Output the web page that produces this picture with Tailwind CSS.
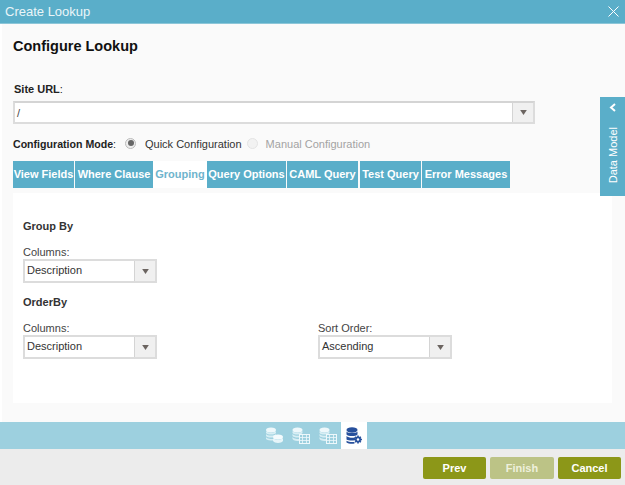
<!DOCTYPE html>
<html><head><meta charset="utf-8"><title>Create Lookup</title>
<script src="https://cdn.jsdelivr.net/npm/@tailwindcss/browser@4"></script></head>
<body class="m-0 overflow-hidden bg-white">
<div class="relative flex flex-col w-[625px] h-[485px] overflow-hidden font-['Liberation_Sans',Arial,sans-serif] text-[#333]">
  <header class="flex items-center justify-between h-[24px] shrink-0 bg-[#5aaec9] border-b border-[#8cc6d8] pl-[5px] pr-[6px] text-white text-[13px]">
    <span class="text-[#eaf5f8]">Create Lookup</span>
    <svg width="11" height="11" viewBox="0 0 11 11" fill="none" stroke="#fff" stroke-width="1"><path d="M0.5 0.5 10.5 10.5M10.5 0.5 0.5 10.5"/></svg>
  </header>
  <main class="flex-1 bg-[#fafafa] ml-[2px] pl-[11px] pr-[13px] flex flex-col min-h-0">
    <h1 class="mt-[13px] h-[19px] leading-[19px] text-[14.5px] font-bold text-[#111]">Configure Lookup</h1>
    <div class="mt-[26px] h-[14px] leading-[14px] text-[11px] font-bold text-[#222] pl-[1px]">Site URL<span class="font-normal">:</span></div>
    <div class="mt-[5px] flex h-[23px] w-[522px] border-2 border-[#dcdcdc] bg-white border-t-[#d4d4d4]">
      <div class="flex-1 pl-[2px] text-[11px] leading-[20px] text-[#444]">/</div>
      <div class="w-[21px] border-l border-[#d4d4d4] bg-[#f0f0f0] flex items-center justify-center"><svg width="7" height="5" viewBox="0 0 8 6"><path d="M0 0H8L4 6Z" fill="#6b6460"/></svg></div>
    </div>
    <div class="mt-[12px] h-[17px] flex items-center text-[11px]">
      <span class="font-bold text-[#222] text-[10.6px]">Configuration Mode<span class="font-normal">:</span></span>
      <span class="ml-[9px] mb-[3px] w-[11px] h-[11px] rounded-full border border-[#bbb] bg-[#eee] flex items-center justify-center"><span class="w-[6px] h-[6px] rounded-full bg-[#666]"></span></span>
      <span class="ml-[9px] text-[#333]">Quick Configuration</span>
      <span class="ml-[5px] mb-[3px] w-[11px] h-[11px] rounded-full border border-[#e4e4e4] bg-[#f2f2f2]"></span>
      <span class="ml-[8px] text-[#a3a3a3]">Manual Configuration</span>
    </div>
    <nav class="mt-[8px] flex h-[27px] text-[11px] font-bold text-white leading-[27px] text-center whitespace-nowrap">
      <div class="w-[61px] bg-[#5aaec9]">View Fields</div>
      <div class="w-[78px] ml-[1px] bg-[#5aaec9]">Where Clause</div>
      <div class="w-[54px] bg-white text-[#6fb4cd]">Grouping</div>
      <div class="w-[79px] bg-[#5aaec9]">Query Options</div>
      <div class="w-[71px] bg-[#5aaec9] ml-[1px]">CAML Query</div>
      <div class="w-[61px] bg-[#5aaec9] ml-[2px]">Test Query</div>
      <div class="w-[88px] bg-[#5aaec9] ml-[1px]">Error Messages</div>
    </nav>
    <section class="mt-[5px] h-[210px] bg-white pl-[10px] text-[11px]">
      <h2 class="pt-[26px] h-[40px] leading-[14px] font-bold text-[11px] text-[#333]">Group By</h2>
      <div class="mt-[12px] h-[14px] leading-[14px] text-[#444]">Columns:</div>
      <div class="flex h-[24px] w-[134px] border-2 border-[#dcdcdc] bg-white">
        <div class="flex-1 pl-[2px] leading-[19px] text-[#333]">Description</div>
        <div class="w-[21px] border-l border-[#d4d4d4] bg-[#f0f0f0] flex items-center justify-center"><svg width="7" height="5" viewBox="0 0 8 6"><path d="M0 0H8L4 6Z" fill="#6b6460"/></svg></div>
      </div>
      <h2 class="mt-[12px] h-[14px] leading-[14px] font-bold text-[11px] text-[#333]">OrderBy</h2>
      <div class="mt-[12px] flex">
        <div class="w-[295px]">
          <div class="h-[14px] leading-[14px] text-[#444]">Columns:</div>
          <div class="flex h-[24px] w-[134px] border-2 border-[#dcdcdc] bg-white">
            <div class="flex-1 pl-[2px] leading-[19px] text-[#333]">Description</div>
            <div class="w-[21px] border-l border-[#d4d4d4] bg-[#f0f0f0] flex items-center justify-center"><svg width="7" height="5" viewBox="0 0 8 6"><path d="M0 0H8L4 6Z" fill="#6b6460"/></svg></div>
          </div>
        </div>
        <div>
          <div class="h-[14px] leading-[14px] text-[#444]">Sort Order:</div>
          <div class="flex h-[24px] w-[134px] border-2 border-[#dcdcdc] bg-white">
            <div class="flex-1 pl-[2px] leading-[19px] text-[#333]">Ascending</div>
            <div class="w-[21px] border-l border-[#d4d4d4] bg-[#f0f0f0] flex items-center justify-center"><svg width="7" height="5" viewBox="0 0 8 6"><path d="M0 0H8L4 6Z" fill="#6b6460"/></svg></div>
          </div>
        </div>
      </div>
    </section>
    <div class="h-[19px]"></div>
  </main>
  <div class="h-[27px] shrink-0 bg-[#9dd0df] flex justify-center pl-[5px]">
    <div class="w-[22px] flex items-center justify-center"><svg width="19" height="17" viewBox="0 0 19 17"><ellipse cx="6" cy="3" rx="5" ry="2.500" fill="#eef8fb"/><path d="M1 4C2.500 6 9.500 6 11 4V6C9.500 8 2.500 8 1 6ZM1 7C2.500 9 9.500 9 11 7V9C9.500 11 2.500 11 1 9ZM1 10C2 12 7 12 8 12V13.500C5 13.500 2 13 1 12Z" fill="#d7eef4"/><ellipse cx="13" cy="10" rx="5" ry="2.500" fill="#f4fbfd"/><path d="M8 11C9.500 13 16.500 13 18 11V14C16.500 16.500 9.500 16.500 8 14Z" fill="#e6f5f9"/></svg></div>
    <div class="w-[22px] ml-[5px] flex items-center justify-center"><svg width="18" height="17" viewBox="0 0 18 17"><ellipse cx="5.500" cy="3" rx="5" ry="2.500" fill="#eef8fb"/><path d="M.5 4C2 6 9 6 10.500 4V6C9 8 2 8 .5 6ZM.5 7C2 9 7 9 8 8.500V10C6 11 2 10.500 .5 9ZM.5 10C2 12 6 12 7 12V14C5 14 2 14 .5 12Z" fill="#d7eef4"/><rect x="7.500" y="7.500" width="10" height="9" fill="#9dd0df" stroke="#eef8fb"/><path d="M10.500 8V16M14.500 8V16M8 10.500H17M8 13.500H17" stroke="#eef8fb" stroke-width=".8"/></svg></div>
    <div class="w-[22px] ml-[5px] flex items-center justify-center"><svg width="18" height="17" viewBox="0 0 18 17"><ellipse cx="5.500" cy="3" rx="5" ry="2.500" fill="#eef8fb"/><path d="M.5 4C2 6 9 6 10.500 4V6C9 8 2 8 .5 6ZM.5 7C2 9 7 9 8 8.500V10C6 11 2 10.500 .5 9ZM.5 10C2 12 6 12 7 12V14C5 14 2 14 .5 12Z" fill="#d7eef4"/><rect x="7.500" y="7.500" width="10" height="9" fill="#9dd0df" stroke="#eef8fb"/><path d="M10.500 8V16M14.500 8V16M8 10.500H17M8 13.500H17" stroke="#eef8fb" stroke-width=".8"/></svg></div>
    <div class="w-[26px] ml-[2px] bg-white flex items-center justify-center"><svg width="17" height="18" viewBox="0 0 17 18"><ellipse cx="6" cy="3" rx="5.500" ry="2.700" fill="#27509c"/><path d="M.5 4.500C2 6.500 10 6.500 11.500 4.500V7.500C10 9.500 2 9.500 .5 7.500ZM.5 9C2 11 8 11 9.500 10.300L8.500 13.300C6 13.800 2 13.500 .5 12.500ZM.5 13.800C2 15 6 15.300 8.500 15V16.500C6 17 2 16.700 .5 15.500Z" fill="#27509c"/><path d="M12 8.500V16.500M8 12.500H16M9.200 9.700 14.800 15.300M14.800 9.700 9.200 15.300" stroke="#27509c" stroke-width="1.600"/><circle cx="12" cy="12.500" r="3" fill="#27509c"/><circle cx="12" cy="12.500" r="1.200" fill="#fff"/></svg></div>
  </div>
  <footer class="h-[36px] shrink-0 bg-[#ececec] flex justify-end gap-[4px] pt-[8px] pr-[4px] text-[11px] font-bold text-white">
    <button class="w-[63px] h-[22px] rounded-[2px] bg-[#8c9718]">Prev</button>
    <button class="w-[64px] h-[22px] rounded-[2px] bg-[#bcc386] text-[#eef0dc]">Finish</button>
    <button class="w-[63px] h-[22px] rounded-[2px] bg-[#8c9718]">Cancel</button>
  </footer>
  <aside class="absolute right-0 top-[97px] w-[25px] h-[99px] bg-[#5aaec9] flex flex-col items-center text-white">
    <svg class="mt-[6px]" width="7" height="9" viewBox="0 0 7 9" fill="none" stroke="#fff" stroke-width="2"><path d="M6 1 2 4.500 6 8"/></svg>
    <span class="mt-[15px] text-[11px] leading-[14px] [writing-mode:vertical-rl] rotate-180">Data Model</span>
  </aside>
</div>
</body></html>
